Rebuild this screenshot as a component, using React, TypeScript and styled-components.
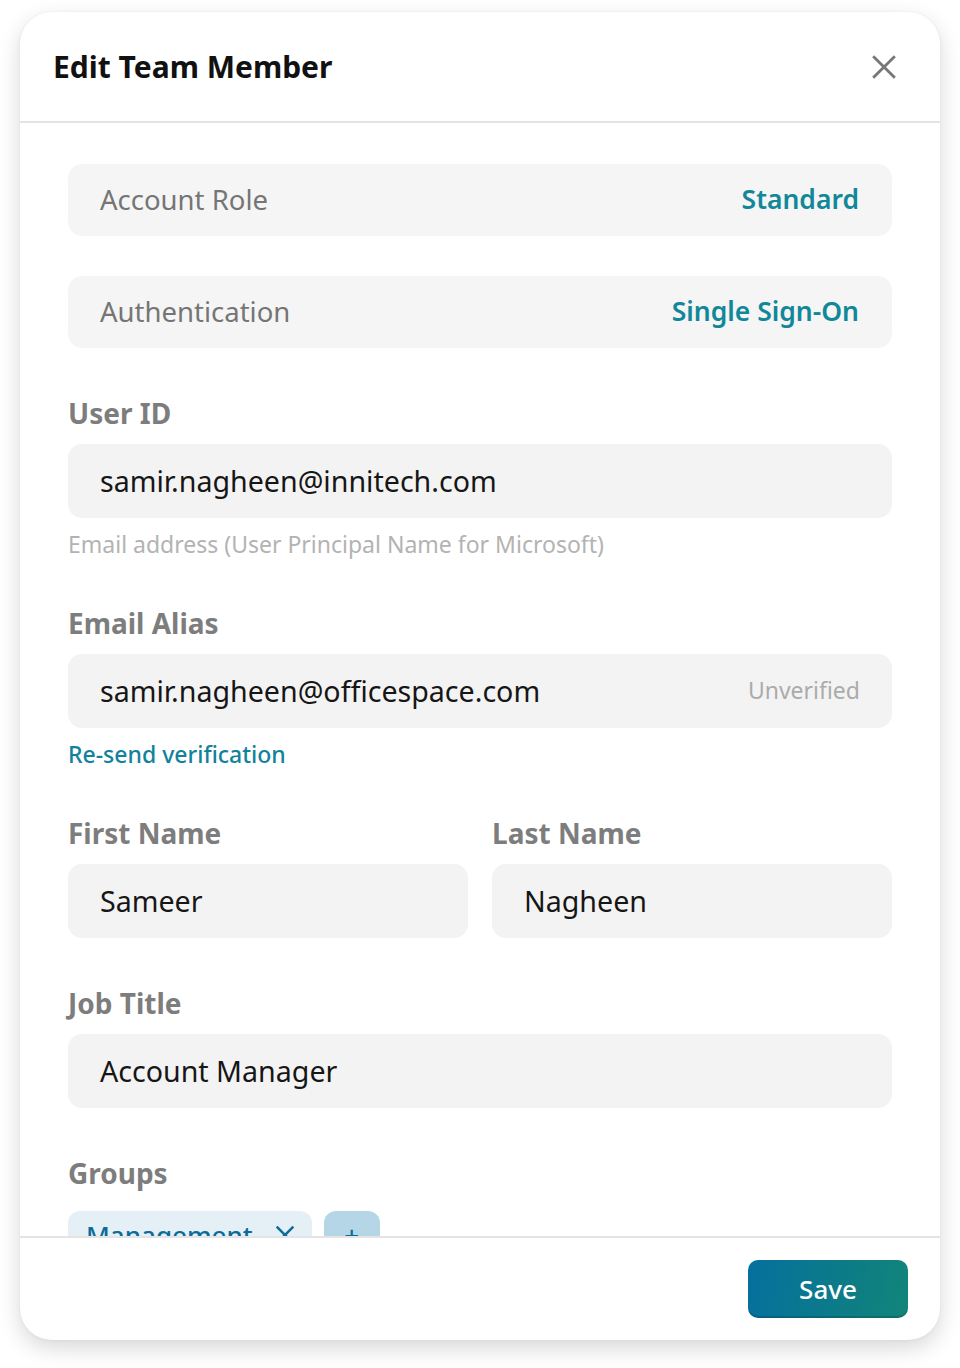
import React from "react";
import styled, { createGlobalStyle } from "styled-components";

const GlobalStyle = createGlobalStyle`
  *, *::before, *::after {
    box-sizing: border-box;
  }
  html, body {
    margin: 0;
    padding: 0;
    background: #ffffff;
  }
  body {
    font-family: "Noto Sans", "Open Sans", sans-serif;
  }
`;

const Page = styled.div`
  padding: 12px 20px 28px;
`;

const Card = styled.div`
  height: 1328px;
  display: flex;
  flex-direction: column;
  background: #fff;
  border-radius: 32px;
  box-shadow: 0 8px 22px rgba(0, 0, 0, 0.16), 0 0 3px rgba(0, 0, 0, 0.05);
  overflow: hidden;
`;

const Header = styled.div`
  height: 111px;
  flex-shrink: 0;
  display: flex;
  align-items: center;
  justify-content: space-between;
  padding: 0 40px 0 33px;
  border-bottom: 2px solid #e4e4e4;
`;

const Title = styled.h1`
  margin: 0;
  font-size: 30px;
  font-weight: 700;
  color: #111;
`;

const CloseButton = styled.button`
  border: 0;
  background: none;
  padding: 0;
  width: 32px;
  height: 32px;
  display: flex;
  align-items: center;
  justify-content: center;
  cursor: pointer;
`;

const Body = styled.div`
  flex: 1;
  overflow: hidden;
  padding: 41px 48px 0;
  display: flex;
  flex-direction: column;
`;

const InfoRow = styled.div<{ $gap?: number }>`
  height: 72px;
  flex-shrink: 0;
  display: flex;
  align-items: center;
  justify-content: space-between;
  padding: 0 33px 2px 32px;
  background: #f5f5f5;
  border-radius: 14px;
  margin-top: ${(p) => p.$gap ?? 0}px;
`;

const InfoLabel = styled.span`
  font-size: 27.5px;
  color: #757575;
`;

const InfoValue = styled.span`
  font-size: 26.5px;
  font-weight: 600;
  color: #11879a;
`;

const Field = styled.div`
  margin-top: 48px;
  display: flex;
  flex-direction: column;
  min-width: 0;
`;

const Label = styled.div`
  font-size: 28px;
  line-height: 34px;
  font-weight: 700;
  color: #7d7d7d;
  margin-bottom: 14px;
`;

const Input = styled.div`
  height: 74px;
  display: flex;
  align-items: center;
  justify-content: space-between;
  padding: 0 32px 2px;
  background: #f3f3f3;
  border-radius: 14px;
  font-size: 28.6px;
  color: #161616;
`;

const Status = styled.span`
  font-size: 23px;
  color: #ababab;
`;

const Helper = styled.div`
  margin-top: 12px;
  font-size: 23px;
  line-height: 28px;
  color: #b3b3b3;
`;

const LinkText = styled.div`
  margin-top: 12px;
  font-size: 23px;
  line-height: 28px;
  font-weight: 500;
  color: #12829c;
`;

const TwoCol = styled.div`
  display: grid;
  grid-template-columns: 1fr 1fr;
  gap: 24px;
`;

const Chips = styled.div`
  display: flex;
  gap: 12px;
  margin-top: 7px;
`;

const Chip = styled.div<{ $strong?: boolean }>`
  height: 48px;
  display: flex;
  align-items: center;
  justify-content: center;
  gap: 22px;
  padding: 0 ${(p) => (p.$strong ? 0 : 17)}px 0 ${(p) => (p.$strong ? 0 : 18)}px;
  width: ${(p) => (p.$strong ? "56px" : "auto")};
  border-radius: 12px;
  background: ${(p) => (p.$strong ? "#b4d6e6" : "#e4f0f5")};
  color: #0c6c97;
  font-size: 26px;
  font-weight: 500;
  flex-shrink: 0;
`;

const Footer = styled.div`
  height: 104px;
  flex-shrink: 0;
  display: flex;
  align-items: center;
  justify-content: flex-end;
  padding: 0 32px;
  border-top: 2px solid #e4e4e4;
`;

const SaveButton = styled.button`
  width: 160px;
  height: 58px;
  border: 0;
  border-radius: 10px;
  background: linear-gradient(100deg, #05709e 0%, #0e7e83 70%, #12857a 100%);
  box-shadow: inset 0 -2px 0 rgba(0, 0, 0, 0.15);
  color: #fff;
  font-family: inherit;
  font-size: 26px;
  font-weight: 500;
  cursor: pointer;
`;

const XIcon = ({ size, color, width }: { size: number; color: string; width: number }) => (
  <svg width={size} height={size} viewBox="0 0 24 24" fill="none">
    <path d="M2 2L22 22M22 2L2 22" stroke={color} strokeWidth={width} strokeLinecap="butt" />
  </svg>
);

const App = () => (
  <Page>
    <GlobalStyle />
    <Card>
      <Header>
        <Title>Edit Team Member</Title>
        <CloseButton aria-label="Close">
          <XIcon size={26} color="#777" width={2.6} />
        </CloseButton>
      </Header>
      <Body>
        <InfoRow>
          <InfoLabel>Account Role</InfoLabel>
          <InfoValue>Standard</InfoValue>
        </InfoRow>
        <InfoRow $gap={40}>
          <InfoLabel>Authentication</InfoLabel>
          <InfoValue>Single Sign-On</InfoValue>
        </InfoRow>

        <Field>
          <Label>User ID</Label>
          <Input>samir.nagheen@innitech.com</Input>
          <Helper>Email address (User Principal Name for Microsoft)</Helper>
        </Field>

        <Field>
          <Label>Email Alias</Label>
          <Input>
            samir.nagheen@officespace.com
            <Status>Unverified</Status>
          </Input>
          <LinkText>Re-send verification</LinkText>
        </Field>

        <TwoCol>
          <Field>
            <Label>First Name</Label>
            <Input>Sameer</Input>
          </Field>
          <Field>
            <Label>Last Name</Label>
            <Input>Nagheen</Input>
          </Field>
        </TwoCol>

        <Field>
          <Label>Job Title</Label>
          <Input>Account Manager</Input>
        </Field>

        <Field>
          <Label>Groups</Label>
          <Chips>
            <Chip>
              Management
              <XIcon size={20} color="#0c6c97" width={3} />
            </Chip>
            <Chip $strong>+</Chip>
          </Chips>
        </Field>
      </Body>
      <Footer>
        <SaveButton>Save</SaveButton>
      </Footer>
    </Card>
  </Page>
);

export default App;
